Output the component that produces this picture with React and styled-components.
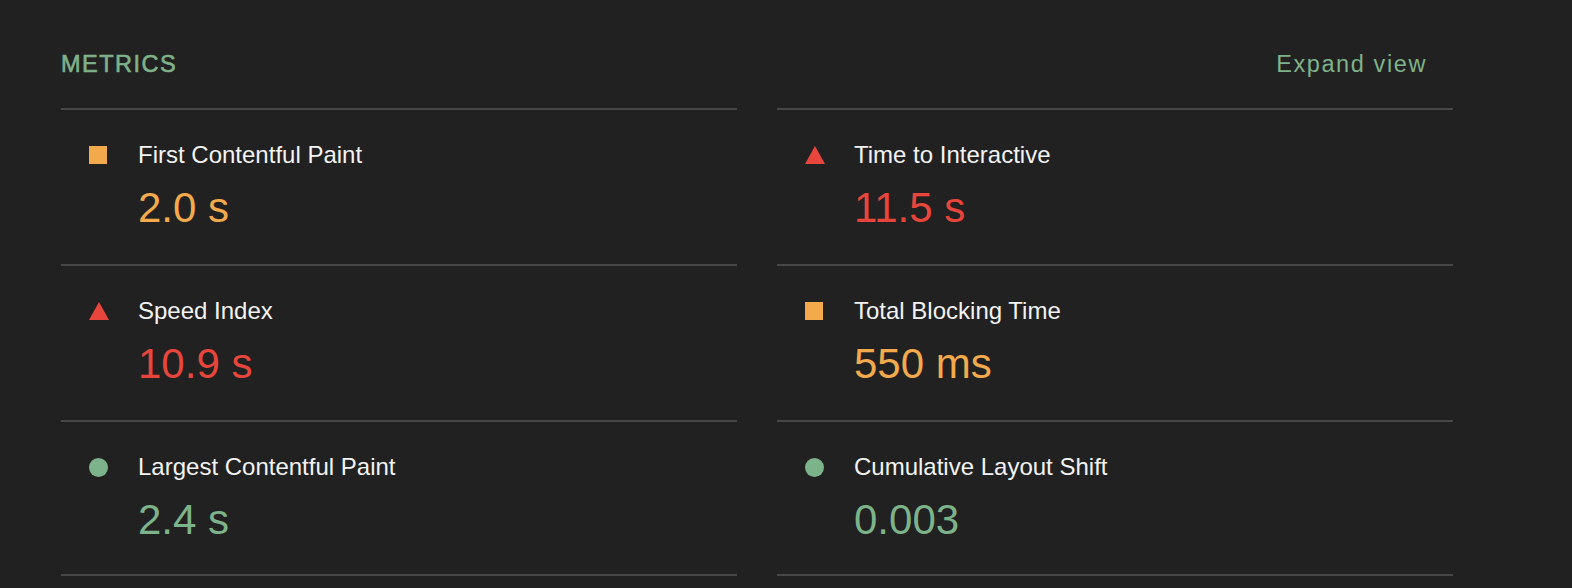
import React from "react";
import styled, { createGlobalStyle } from "styled-components";

const GlobalStyle = createGlobalStyle`
  html, body {
    margin: 0;
    background: #212121;
  }
  body {
    font-family: "Liberation Sans", Arial, Helvetica, sans-serif;
    -webkit-font-smoothing: antialiased;
  }
`;

const colors = {
  average: "#f2aa4c",
  fail: "#e8463c",
  pass: "#7db38a",
};

const Page = styled.div`
  width: 1392px;
  padding: 0 0 0 61px;
  min-height: 588px;
`;

const Header = styled.div`
  height: 108px;
  display: flex;
  align-items: center;
  justify-content: space-between;
  padding: 20px 26px 0 0;
  box-sizing: border-box;
`;

const GroupTitle = styled.div`
  color: #7fb28b;
  font-size: 23.5px;
  letter-spacing: 1.5px;
  text-transform: uppercase;
  -webkit-text-stroke: 0.6px #7fb28b;
`;

const ExpandLink = styled.a`
  color: #7fb28b;
  font-size: 23.5px;
  letter-spacing: 1.6px;
  text-decoration: none;
  cursor: pointer;
`;

const Grid = styled.div`
  display: grid;
  grid-template-columns: 676px 676px;
  column-gap: 40px;
`;

const Metric = styled.div`
  border-top: 2px solid #474747;
  height: 156px;
  padding: 30px 0 0 28px;
  box-sizing: border-box;
  display: grid;
  grid-template-columns: 49px 1fr;
  grid-template-rows: 30px 50px;
  align-content: start;
  row-gap: 13px;

  &:nth-last-child(-n + 2) {
    border-bottom: 2px solid #474747;
  }
`;

const IconCell = styled.div`
  display: flex;
  align-items: center;
  height: 30px;
`;

const Square = styled.span`
  width: 18px;
  height: 18px;
  background: ${colors.average};
  display: block;
`;

const Circle = styled.span`
  width: 19px;
  height: 19px;
  border-radius: 50%;
  background: ${colors.pass};
  display: block;
`;

const Triangle = styled.span`
  width: 0;
  height: 0;
  border-left: 10px solid transparent;
  border-right: 10px solid transparent;
  border-bottom: 18px solid ${colors.fail};
  display: block;
  margin-top: -1px;
`;

const Title = styled.div`
  color: #f3f3f3;
  font-size: 24px;
  line-height: 30px;
`;

const Value = styled.div`
  grid-column: 2;
  color: ${(p) => colors[p.$status]};
  font-size: 42px;
  line-height: 50px;
`;

const icons = {
  average: Square,
  fail: Triangle,
  pass: Circle,
};

const metrics = [
  { title: "First Contentful Paint", value: "2.0 s", status: "average" },
  { title: "Time to Interactive", value: "11.5 s", status: "fail" },
  { title: "Speed Index", value: "10.9 s", status: "fail" },
  { title: "Total Blocking Time", value: "550 ms", status: "average" },
  { title: "Largest Contentful Paint", value: "2.4 s", status: "pass" },
  { title: "Cumulative Layout Shift", value: "0.003", status: "pass" },
];

export default function App() {
  return (
    <>
      <GlobalStyle />
      <Page>
        <Header>
          <GroupTitle>Metrics</GroupTitle>
          <ExpandLink>Expand view</ExpandLink>
        </Header>
        <Grid>
          {metrics.map((m) => {
            const Icon = icons[m.status];
            return (
              <Metric key={m.title}>
                <IconCell>
                  <Icon />
                </IconCell>
                <Title>{m.title}</Title>
                <Value $status={m.status}>{m.value}</Value>
              </Metric>
            );
          })}
        </Grid>
      </Page>
    </>
  );
}
